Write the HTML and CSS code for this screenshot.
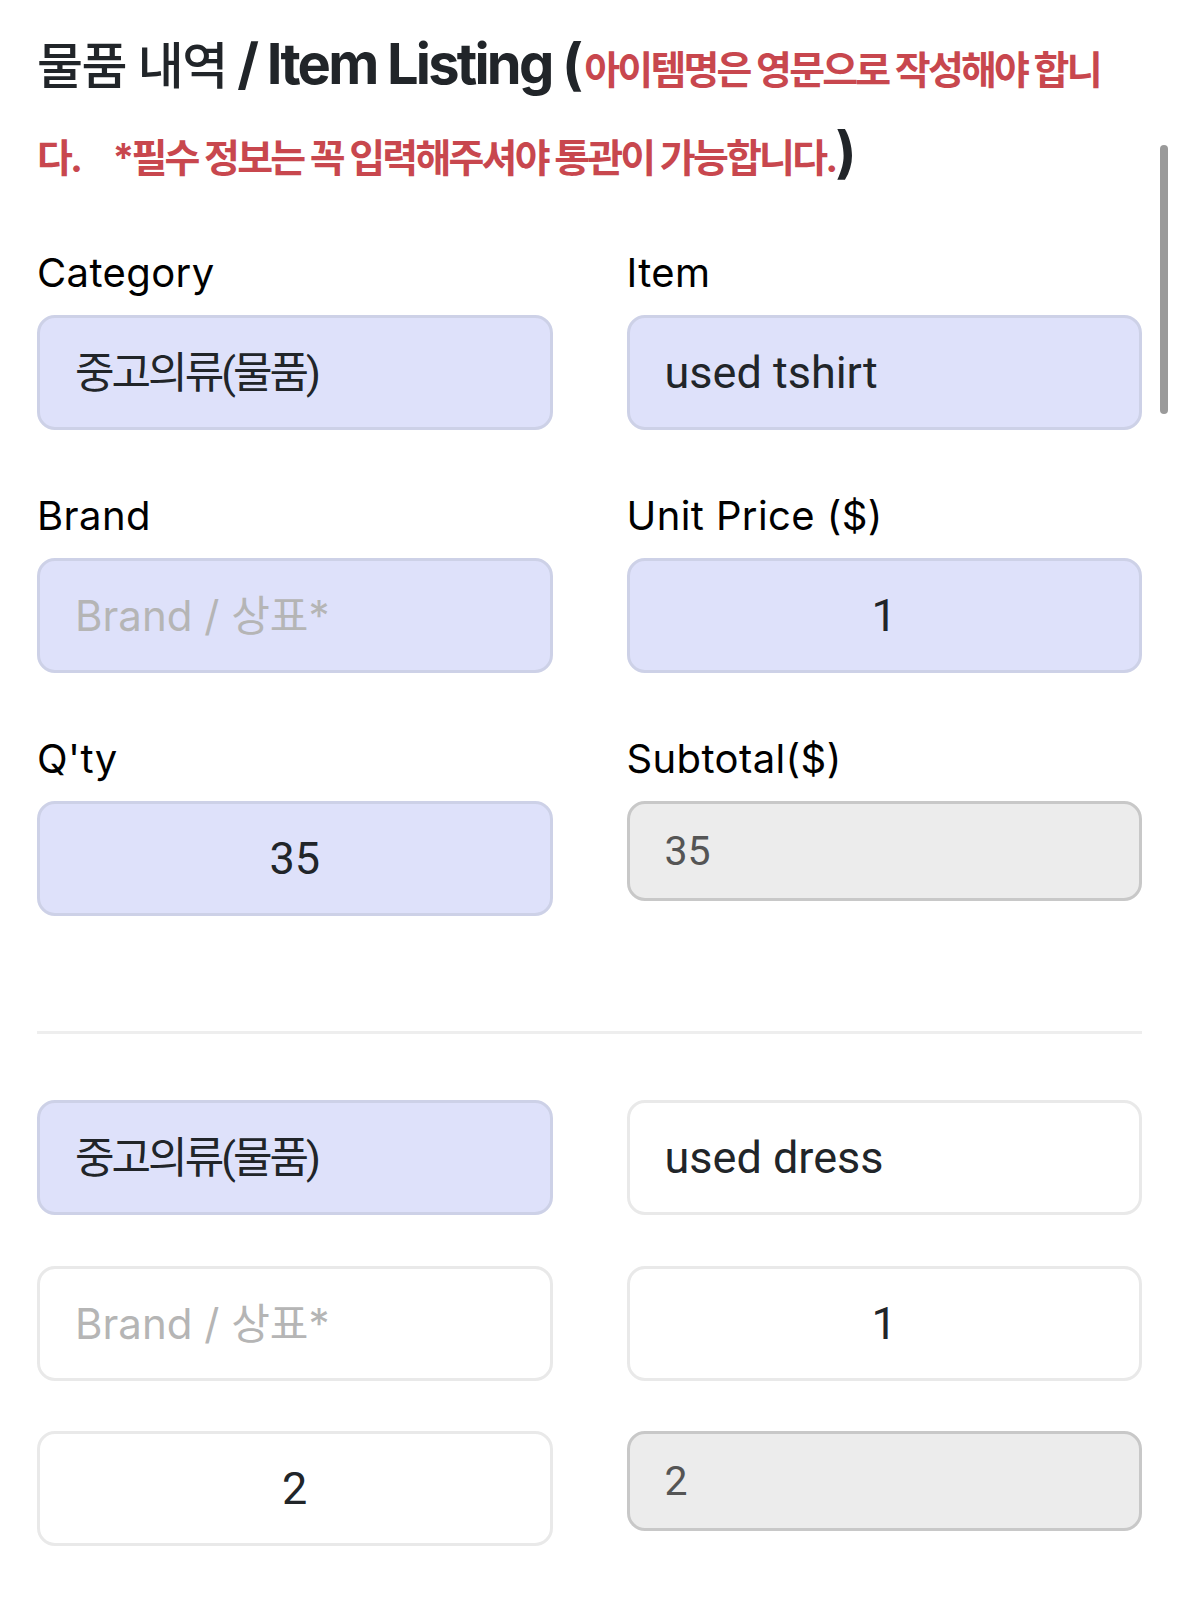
FILE: index.html
```html
<!DOCTYPE html>
<html lang="ko">
<head>
  <meta charset="UTF-8">
  <meta name="viewport" content="width=device-width, initial-scale=1">
  <title>Item Listing</title>
  <link rel="stylesheet" href="styles.css">
</head>
<body>
  <h2 class="title"><span class="ko">물품 내역</span> / Item Listing (<span class="warn">아이템명은 영문으로 작성해야 합니다.&nbsp;&nbsp;&nbsp;&nbsp; *필수 정보는 꼭 입력해주셔야 통관이 가능합니다.</span>)</h2>

  <div class="items">
    <div class="field">
      <label for="cat1">Category</label>
      <select id="cat1" class="inp filled sel">
        <option>중고의류(물품)</option>
      </select>
    </div>
    <div class="field">
      <label for="item1">Item</label>
      <input id="item1" class="inp filled" type="text" value="used tshirt">
    </div>
    <div class="field">
      <label for="brand1">Brand</label>
      <input id="brand1" class="inp filled" type="text" placeholder="Brand / 상표*">
    </div>
    <div class="field">
      <label for="price1">Unit Price ($)</label>
      <input id="price1" class="inp filled num" type="number" value="1">
    </div>
    <div class="field">
      <label for="qty1">Q'ty</label>
      <input id="qty1" class="inp filled num" type="number" value="35">
    </div>
    <div class="field">
      <label for="sub1">Subtotal($)</label>
      <input id="sub1" class="inp" type="text" value="35" disabled>
    </div>
  </div>

  <hr class="sep">

  <div class="items bare">
    <select class="inp filled sel">
      <option>중고의류(물품)</option>
    </select>
    <input class="inp" type="text" value="used dress">
    <input class="inp" type="text" placeholder="Brand / 상표*">
    <input class="inp num" type="number" value="1">
    <input class="inp num" type="number" value="2">
    <input class="inp" type="text" value="2" disabled>
  </div>

  <div class="scrollbar"></div>
</body>
</html>
```

FILE: styles.css
```css
body {
  margin: 0;
  padding: 20px 37px;
  background: #fff;
  color: #212529;
  font-family: Inter, "Noto Sans CJK KR", sans-serif;
}

.title {
  margin: 0 0 48px;
  font-size: 56px; font-weight: 700;
  line-height: 88px;
  letter-spacing: -2.8px;
  color: #212529;
}
.title .ko {
  font-size: 50px; font-weight: 500;
  letter-spacing: -1.5px;
  line-height: 1;
}
.title .warn {
  padding-left: 4px;
  font-size: 39px; font-weight: 700;
  letter-spacing: -2.8px;
  line-height: 1;
  color: #c8474e;
}

.items {
  display: grid;
  grid-template-columns: 1fr 1fr;
  column-gap: 74px; row-gap: 57px;
  align-items: start;
}
.items.bare { row-gap: 50.5px; }

.field label {
  display: block;
  font-size: 40px; line-height: 58px;
  letter-spacing: 0.4px;
  color: #000;
  margin-bottom: 13px;
}

.inp {
  display: block;
  width: 100%; height: 115px;
  box-sizing: border-box;
  margin: 0; padding: 0 35px;
  border: 3px solid #e9e9e9; border-radius: 18px;
  background: #fff;
  font-family: Roboto, "Noto Sans CJK KR", sans-serif;
  font-size: 45px;
  color: #212529;
  outline: none;
}
.inp.filled { background: #dee1fa; border-color: #cdd1e7; }
.inp::placeholder {
  font-family: Inter, "Noto Sans CJK KR", sans-serif;
  font-size: 42px;
  color: #b5b5b5;
}
.inp.num { text-align: center; }
.inp.num::-webkit-inner-spin-button,
.inp.num::-webkit-outer-spin-button { -webkit-appearance: none; margin: 0; }
.inp:disabled {
  height: 100px;
  background: #ececec; border-color: #c8c8c8;
  color: #555; -webkit-text-fill-color: #555;
  font-size: 41px;
}
.sel {
  -webkit-appearance: none; appearance: none;
  font-size: 43px; letter-spacing: -3px;
}

.sep {
  height: 3px; border: 0;
  background: #eeeeee;
  margin: 115px 0 66px;
}

.scrollbar {
  position: fixed; top: 145px; right: 11px;
  width: 8px; height: 269px;
  border-radius: 4px;
  background: #9a9a9a;
}
```
